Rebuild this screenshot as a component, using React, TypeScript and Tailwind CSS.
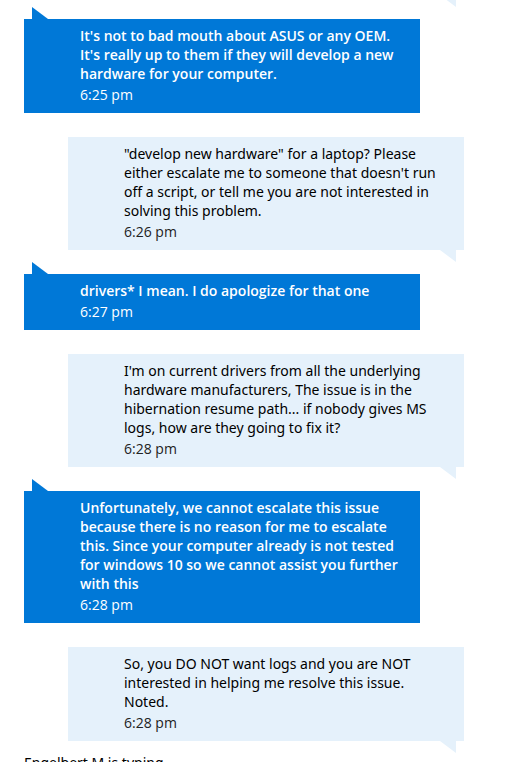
type Message = {
  from: 'agent' | 'customer';
  lines: string[];
  time: string;
};

const messages: Message[] = [
  {
    from: 'agent',
    lines: [
      "It's not to bad mouth about ASUS or any OEM.",
      "It's really up to them if they will develop a new",
      'hardware for your computer.',
    ],
    time: '6:25 pm',
  },
  {
    from: 'customer',
    lines: [
      '"develop new hardware" for a laptop? Please',
      "either escalate me to someone that doesn't run",
      'off a script, or tell me you are not interested in',
      'solving this problem.',
    ],
    time: '6:26 pm',
  },
  { from: 'agent', lines: ['drivers* I mean. I do apologize for that one'], time: '6:27 pm' },
  {
    from: 'customer',
    lines: [
      "I'm on current drivers from all the underlying",
      'hardware manufacturers, The issue is in the',
      'hibernation resume path... if nobody gives MS',
      'logs, how are they going to fix it?',
    ],
    time: '6:28 pm',
  },
  {
    from: 'agent',
    lines: [
      'Unfortunately, we cannot escalate this issue',
      'because there is no reason for me to escalate',
      'this. Since your computer already is not tested',
      'for windows 10 so we cannot assist you further',
      'with this',
    ],
    time: '6:28 pm',
  },
  {
    from: 'customer',
    lines: [
      'So, you DO NOT want logs and you are NOT',
      'interested in helping me resolve this issue.',
      'Noted.',
    ],
    time: '6:28 pm',
  },
];

function AgentTail() {
  return (
    <svg className="absolute bottom-full left-2 h-3 w-4" viewBox="0 0 16 12" aria-hidden="true">
      <path d="M0 0L16 12H0Z" fill="#0078d7" />
    </svg>
  );
}

function CustomerTail() {
  return (
    <svg className="absolute right-2 top-full h-3 w-4" viewBox="0 0 16 12" aria-hidden="true">
      <path d="M0 0H16V12Z" fill="#e5f1fb" />
    </svg>
  );
}

function Bubble({ message }: { message: Message }) {
  const agent = message.from === 'agent';
  return (
    <li
      className={
        agent
          ? 'relative w-9/10 self-start bg-[#0078d7] pt-[7px] pr-4 pb-[9px] pl-14 text-white'
          : 'relative w-9/10 self-end bg-[#e5f1fb] pt-[7px] pr-4 pb-[9px] pl-14 text-black'
      }
    >
      {agent ? <AgentTail /> : <CustomerTail />}
      <p
        className={
          agent
            ? 'whitespace-pre font-semibold'
            : "whitespace-pre font-['Noto_Sans','Open_Sans',sans-serif] font-[450]"
        }
      >
        {message.lines.join('\n')}
      </p>
      <time className={agent ? 'mt-0.5 block' : 'mt-0.5 block text-[#222222]'}>{message.time}</time>
    </li>
  );
}

export default function App() {
  return (
    <main className="h-screen overflow-hidden bg-white pr-[42px] pl-6 font-['Open_Sans','Noto_Sans',sans-serif] text-[14px] leading-[19px] text-black">
      <ul className="-mt-[5px] flex flex-col gap-6">
        <li className="relative w-9/10 self-end">
          <CustomerTail />
        </li>
        {messages.map((message, index) => (
          <Bubble key={index} message={message} />
        ))}
      </ul>
      <p className="mt-3 font-['Noto_Sans','Open_Sans',sans-serif] font-[450]">Engelbert M is typing...</p>
    </main>
  );
}
